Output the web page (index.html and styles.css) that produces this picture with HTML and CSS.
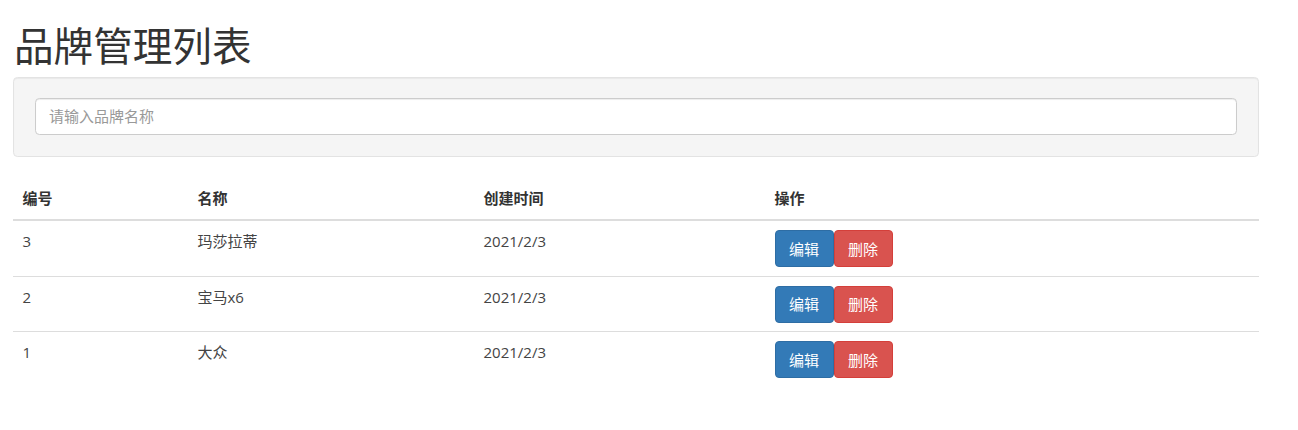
FILE: index.html
```html
<!DOCTYPE html>
<html lang="zh-CN">
<head>
<meta charset="utf-8">
<title>品牌管理列表</title>
<link rel="stylesheet" href="styles.css">
</head>
<body>
<div class="page">
  <h1 class="title">品牌管理列表</h1>
  <div class="well">
    <input class="form-control" type="text" placeholder="请输入品牌名称">
  </div>
  <table class="table">
    <thead>
      <tr>
        <th class="col-id">编号</th>
        <th class="col-name">名称</th>
        <th class="col-time">创建时间</th>
        <th class="col-op">操作</th>
      </tr>
    </thead>
    <tbody>
      <tr>
        <td>3</td>
        <td>玛莎拉蒂</td>
        <td>2021/2/3</td>
        <td><div class="btns"><button class="btn btn-primary">编辑</button><button class="btn btn-danger">删除</button></div></td>
      </tr>
      <tr>
        <td>2</td>
        <td>宝马x6</td>
        <td>2021/2/3</td>
        <td><div class="btns"><button class="btn btn-primary">编辑</button><button class="btn btn-danger">删除</button></div></td>
      </tr>
      <tr>
        <td>1</td>
        <td>大众</td>
        <td>2021/2/3</td>
        <td><div class="btns"><button class="btn btn-primary">编辑</button><button class="btn btn-danger">删除</button></div></td>
      </tr>
    </tbody>
  </table>
</div>
</body>
</html>
```

FILE: styles.css
```css
* { box-sizing: border-box; }

html, body {
  margin: 0;
  padding: 0;
  background: #fff;
}

body {
  font-family: "Open Sans", "Noto Sans CJK SC", sans-serif;
  font-size: 15px;
  line-height: 22px;
  color: #333;
}

.page {
  margin-left: 13px;
  width: 1246px;
}

.title {
  margin: 22px 0 11px 1px;
  font-family: "Noto Sans CJK SC", sans-serif;
  font-size: 39.6px;
  line-height: 1.1;
  font-weight: 400;
  color: #333;
}

.well {
  padding: 20px 21px 21px;
  background: #f5f5f5;
  border: 1px solid #e3e3e3;
  border-radius: 4.4px;
  box-shadow: inset 0 1px 1px rgba(0, 0, 0, 0.05);
  margin-bottom: 22px;
}

.form-control {
  display: block;
  width: 100%;
  height: 37px;
  padding: 6.6px 13px;
  font-family: "Open Sans", "Noto Sans CJK SC", sans-serif;
  font-size: 15px;
  line-height: 22px;
  color: #555;
  background: #fff;
  border: 1px solid #ccc;
  border-radius: 4.4px;
  box-shadow: inset 0 1px 1px rgba(0, 0, 0, 0.075);
  outline: none;
}

.form-control::placeholder {
  color: #999;
}

.table {
  width: 100%;
  border-collapse: collapse;
  border-spacing: 0;
  table-layout: fixed;
}

.table th,
.table td {
  padding: 8.8px 9.5px;
  text-align: left;
  vertical-align: top;
  line-height: 22px;
}

.table th {
  font-weight: 700;
  font-size: 15px;
  padding-bottom: 9.8px;
  border-bottom: 2px solid #ddd;
}

.table td {
  font-size: 15px;
  border-top: 1px solid #ddd;
  color: #444;
}

.table tbody tr:first-child td {
  border-top: 0;
}

.col-id { width: 175px; }
.col-name { width: 286px; }
.col-time { width: 291px; }
.col-op { width: auto; }

.btns {
  display: flex;
}

.btn {
  display: inline-block;
  height: 37px;
  padding: 6.6px 0;
  font-family: "Noto Sans CJK SC", sans-serif;
  font-size: 15px;
  line-height: 22px;
  text-align: center;
  color: #fff;
  border: 1px solid transparent;
  border-radius: 4px;
  cursor: pointer;
}

.btn-primary {
  width: 59px;
  background: #337ab7;
  border-color: #2e6da4;
}

.btn-danger {
  width: 59px;
  background: #d9534f;
  border-color: #d43f3a;
}
```
